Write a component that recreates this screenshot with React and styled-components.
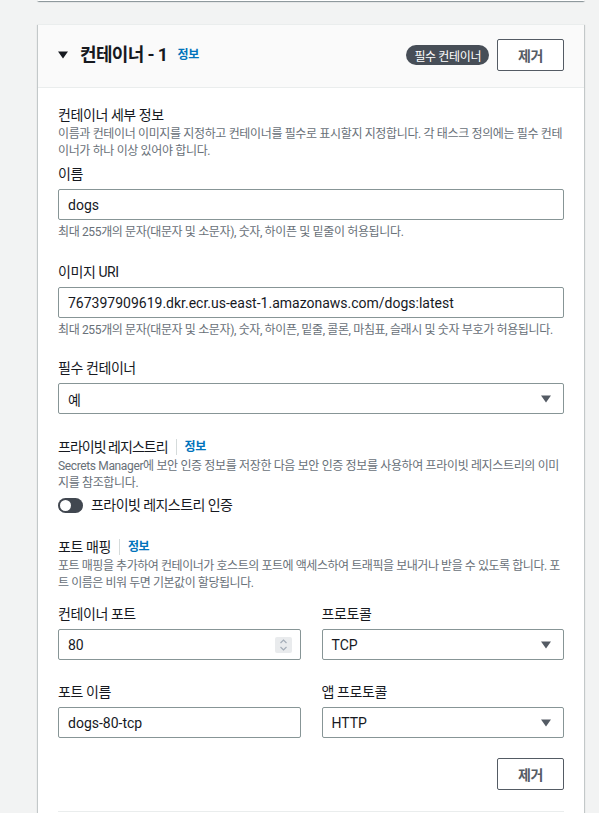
import React from "react";
import styled, { createGlobalStyle, css } from "styled-components";

const GlobalStyle = createGlobalStyle`
  html, body { margin: 0; padding: 0; background: #f2f3f3; }
  body {
    font-family: Roboto, "Noto Sans CJK KR", sans-serif;
    color: #16191f;
    -webkit-font-smoothing: antialiased;
  }
  * { box-sizing: border-box; }
`;

const ko = css`
  letter-spacing: -0.03em;
`;

const Page = styled.div`
  padding: 0 15px 40px 38px;
  min-height: 813px;
`;

const cardShadow = css`
  box-shadow: 0 1px 1px 0 rgba(0, 28, 36, 0.3), 1px 1px 1px 0 rgba(0, 28, 36, 0.15),
    -1px 1px 1px 0 rgba(0, 28, 36, 0.15);
`;

const PrevCard = styled.div`
  height: 1px;
  background: #fff;
  ${cardShadow}
`;

const Card = styled.section`
  margin-top: 23px;
  background: #fff;
  border-top: 1px solid #eaeded;
  ${cardShadow}
`;

const CardHeader = styled.header`
  display: flex;
  align-items: center;
  justify-content: space-between;
  padding: 14px 20px 16px 20px;
  background: #fafafa;
  border-bottom: 1px solid #eaeded;
`;

const HeaderLeft = styled.div`
  display: flex;
  align-items: center;
`;

const HeaderRight = styled.div`
  display: flex;
  align-items: center;
  gap: 8px;
`;

const Caret = styled.svg`
  flex: none;
  margin-right: 12px;
`;

const Title = styled.h2`
  margin: 0;
  font-size: 18px;
  line-height: 22px;
  font-weight: 700;
  letter-spacing: -0.035em;
`;

const InfoLink = styled.a`
  color: #0073bb;
  font-weight: 700;
  font-size: 12px;
  line-height: 16px;
  text-decoration: none;
  margin-left: ${(p) => p.$gap || 0}px;
  ${ko}
`;

const Badge = styled.span`
  display: inline-flex;
  align-items: center;
  height: 20px;
  padding: 0 8px;
  border-radius: 10px;
  background: #474e57;
  color: #fff;
  font-size: 12px;
  ${ko}
`;

const Button = styled.button`
  height: 32px;
  padding: 0 20px;
  border: 1px solid #545b64;
  border-radius: 2px;
  background: #fff;
  color: #545b64;
  font-family: inherit;
  font-size: 14px;
  font-weight: 700;
  ${ko}
`;

const Body = styled.div`
  padding: 17px 20px 20px 20px;
`;

const Block = styled.div`
  margin-top: ${(p) => p.$mt || 0}px;
`;

const HeadingRow = styled.div`
  display: flex;
  align-items: center;
  height: 20px;
`;

const Heading = styled.div`
  font-size: 14px;
  line-height: 20px;
  letter-spacing: ${(p) => p.$ls || "-0.03em"};
`;

const Pipe = styled.span`
  width: 1px;
  height: 16px;
  background: #d5dbdb;
  margin: 0 8px;
`;

const Desc = styled.p`
  margin: 1px 0 0 0;
  font-size: 12px;
  line-height: 17px;
  color: #687078;
  letter-spacing: ${(p) => p.$ls || "-0.03em"};
`;

const Label = styled.div`
  font-size: 14px;
  line-height: 20px;
  ${ko}
`;

const controlBox = css`
  height: 31px;
  margin-top: 5px;
  border: 1px solid #879596;
  border-radius: 2px;
  background: #fff;
  display: flex;
  align-items: center;
  padding: 0 12px 0 9px;
  font-size: 14px;
  color: #16191f;
`;

const InputBox = styled.div`
  ${controlBox}
  position: relative;
`;

const SelectBox = styled.div`
  ${controlBox}
  justify-content: space-between;
`;

const Value = styled.span`
  letter-spacing: ${(p) => (p.$ko ? "-0.03em" : "0")};
`;

const Help = styled.div`
  margin-top: 4px;
  font-size: 12px;
  line-height: 17px;
  color: #687078;
  ${ko}
`;

const Spinner = styled.span`
  position: absolute;
  right: 8px;
  top: 50%;
  transform: translateY(-50%);
  width: 17px;
  height: 16px;
  border-radius: 2px;
  background: #e9ebed;
  display: flex;
  align-items: center;
  justify-content: center;
`;

const ToggleRow = styled.div`
  display: flex;
  align-items: center;
  gap: 8px;
  height: 20px;
  margin-top: 3px;
`;

const Toggle = styled.span`
  position: relative;
  width: 25px;
  height: 15px;
  border-radius: 8px;
  background: #414750;
  flex: none;

  &::after {
    content: "";
    position: absolute;
    left: 2px;
    top: 2px;
    width: 11px;
    height: 11px;
    border-radius: 50%;
    background: #fff;
  }
`;

const ToggleText = styled.span`
  font-size: 14px;
  line-height: 20px;
  letter-spacing: -0.04em;
`;

const Grid = styled.div`
  display: grid;
  grid-template-columns: 1fr 1fr;
  column-gap: 21px;
  row-gap: 22px;
  margin-top: 12px;
`;

const Actions = styled.div`
  display: flex;
  justify-content: flex-end;
  margin-top: 20px;
`;

const Divider = styled.hr`
  margin: 21px 0 0 0;
  border: 0;
  border-top: 1px solid #eaeded;
`;

const SelectCaret = () => (
  <svg width="10" height="8" viewBox="0 0 10 8">
    <polygon points="0,0.5 10,0.5 5,7.5" fill="#545b64" />
  </svg>
);

const Field = ({ label, value, help, select, number, ko: isKo, mt }) => {
  const Box = select ? SelectBox : InputBox;
  return (
    <Block $mt={mt}>
      <Label>{label}</Label>
      <Box>
        <Value $ko={isKo}>{value}</Value>
        {select && <SelectCaret />}
        {number && (
          <Spinner>
            <svg width="9" height="14" viewBox="0 0 9 14">
              <polyline points="1.5,5 4.5,2 7.5,5" fill="none" stroke="#a4adb8" strokeWidth="1.2" />
              <polyline points="1.5,9 4.5,12 7.5,9" fill="none" stroke="#a4adb8" strokeWidth="1.2" />
            </svg>
          </Spinner>
        )}
      </Box>
      {help && <Help>{help}</Help>}
    </Block>
  );
};

export default function App() {
  return (
    <>
      <GlobalStyle />
      <Page>
        <PrevCard />
        <Card>
          <CardHeader>
            <HeaderLeft>
              <Caret width="10" height="8" viewBox="0 0 10 8">
                <polygon points="0,0.5 10,0.5 5,7.5" fill="#16191f" />
              </Caret>
              <Title>컨테이너 - 1</Title>
              <InfoLink href="#" $gap={10}>정보</InfoLink>
            </HeaderLeft>
            <HeaderRight>
              <Badge>필수 컨테이너</Badge>
              <Button>제거</Button>
            </HeaderRight>
          </CardHeader>
          <Body>
            <Block>
              <Heading>컨테이너 세부 정보</Heading>
              <Desc>
                이름과 컨테이너 이미지를 지정하고 컨테이너를 필수로 표시할지 지정합니다. 각 태스크 정의에는 필수
                컨테이너가 하나 이상 있어야 합니다.
              </Desc>
            </Block>
            <Field
              mt={4}
              label="이름"
              value="dogs"
              help="최대 255개의 문자(대문자 및 소문자), 숫자, 하이픈 및 밑줄이 허용됩니다."
            />
            <Field
              mt={21}
              label="이미지 URI"
              value="767397909619.dkr.ecr.us-east-1.amazonaws.com/dogs:latest"
              help="최대 255개의 문자(대문자 및 소문자), 숫자, 하이픈, 밑줄, 콜론, 마침표, 슬래시 및 숫자 부호가 허용됩니다."
            />
            <Field mt={19} label="필수 컨테이너" value="예" ko select />

            <Block $mt={23}>
              <HeadingRow>
                <Heading $ls="-0.07em">프라이빗 레지스트리</Heading>
                <Pipe />
                <InfoLink href="#">정보</InfoLink>
              </HeadingRow>
              <Desc>
                Secrets Manager에 보안 인증 정보를 저장한 다음 보안 인증 정보를 사용하여 프라이빗 레지스트리의 이미지를
                참조합니다.
              </Desc>
              <ToggleRow>
                <Toggle />
                <ToggleText>프라이빗 레지스트리 인증</ToggleText>
              </ToggleRow>
            </Block>

            <Block $mt={22}>
              <HeadingRow>
                <Heading>포트 매핑</Heading>
                <Pipe />
                <InfoLink href="#">정보</InfoLink>
              </HeadingRow>
              <Desc $ls="-0.037em">
                포트 매핑을 추가하여 컨테이너가 호스트의 포트에 액세스하여 트래픽을 보내거나 받을 수 있도록 합니다.
                포트 이름은 비워 두면 기본값이 할당됩니다.
              </Desc>
            </Block>

            <Grid>
              <Field label="컨테이너 포트" value="80" number />
              <Field label="프로토콜" value="TCP" select />
              <Field label="포트 이름" value="dogs-80-tcp" />
              <Field label="앱 프로토콜" value="HTTP" select />
            </Grid>
            <Actions>
              <Button>제거</Button>
            </Actions>
            <Divider />
          </Body>
        </Card>
      </Page>
    </>
  );
}
